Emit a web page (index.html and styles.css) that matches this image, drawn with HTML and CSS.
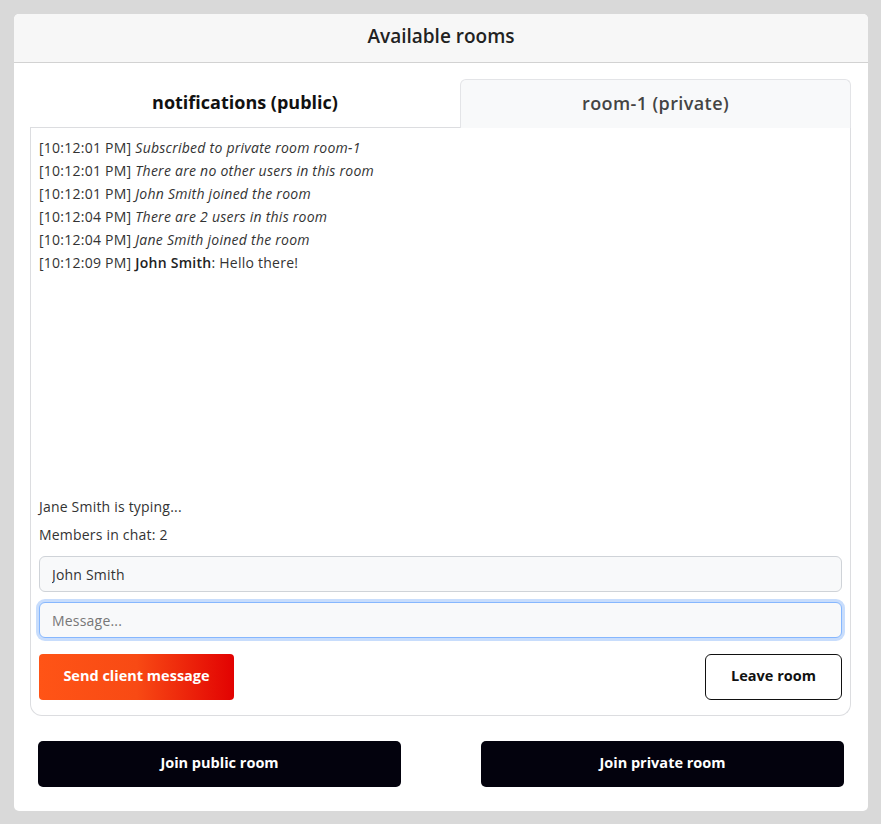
FILE: index.html
```html
<!DOCTYPE html>
<html>
<head>
<meta charset="utf-8">
<link rel="stylesheet" href="styles.css">
</head>
<body>
<div class="card">
  <div class="card-header">Available rooms</div>
  <div class="card-body">
    <div class="tabs">
      <div class="tab active">notifications (public)</div>
      <div class="tab">room-1 (private)</div>
    </div>
    <div class="panel">
      <div class="log">
        <div class="line">[10:12:01 PM] <em>Subscribed to private room room-1</em></div>
        <div class="line">[10:12:01 PM] <em>There are no other users in this room</em></div>
        <div class="line">[10:12:01 PM] <em>John Smith joined the room</em></div>
        <div class="line">[10:12:04 PM] <em>There are 2 users in this room</em></div>
        <div class="line">[10:12:04 PM] <em>Jane Smith joined the room</em></div>
        <div class="line">[10:12:09 PM] <strong>John Smith</strong>: Hello there!</div>
      </div>
      <div class="status">Jane Smith is typing...</div>
      <div class="status">Members in chat: 2</div>
      <input class="field" type="text" value="John Smith">
      <input class="field focus" type="text" placeholder="Message...">
      <div class="actions">
        <button class="btn send">Send client message</button>
        <button class="btn leave">Leave room</button>
      </div>
    </div>
    <div class="join-row">
      <button class="btn join">Join public room</button>
      <button class="btn join">Join private room</button>
    </div>
  </div>
</div>
</body>
</html>
```
FILE: styles.css
```css
html, body {
  margin: 0;
  padding: 0;
  background: #d9d9d9;
  font-family: "Open Sans", Lato, sans-serif;
  color: #222;
}
body {
  padding: 14px 13px 13px 14px;
}
.card {
  width: 854px;
  background: #fff;
  border-radius: 5px;
  overflow: hidden;
}
.card-header {
  height: 48px;
  line-height: 45px;
  background: #f7f7f7;
  border-bottom: 1px solid #d2d2d2;
  text-align: center;
  font-size: 19px;
  font-weight: 600;
  color: #222;
}
.card-body {
  padding: 16px 17px 24px 16px;
}
.tabs {
  display: flex;
  height: 49px;
}
.tab {
  flex: 1;
  display: flex;
  align-items: center;
  justify-content: center;
  padding-bottom: 3px;
  box-sizing: border-box;
  font-size: 18px;
  font-weight: 700;
}
.tab.active {
  border-bottom: 1px solid #dcdde0;
  color: #111;
  flex: 0 0 430px;
}
.tab:not(.active) {
  background: #f8f9fa;
  border: 1px solid #e3e4e7;
  border-bottom: none;
  border-radius: 6px 6px 0 0;
  color: #444;
  font-weight: 600;
  letter-spacing: 0.4px;
}
.panel {
  border: 1px solid #dcdde0;
  border-top: none;
  border-radius: 0 0 12px 12px;
  padding: 8px 8px 15px 8px;
  display: flex;
  flex-direction: column;
}
.log {
  height: 357px;
  font-size: 14px;
  letter-spacing: 0.25px;
  line-height: 23px;
  color: #333;
}
.log em { color: #333; }
.log strong { color: #222; font-weight: 600; }
.status {
  font-size: 14px;
  letter-spacing: 0.2px;
  line-height: 28px;
  color: #333;
}
.field {
  height: 36px;
  box-sizing: border-box;
  border: 1px solid #cfd3d8;
  border-radius: 6px;
  background: #f8f9fa;
  padding: 0 12px;
  font-family: inherit;
  font-size: 14px;
  letter-spacing: 0.2px;
  color: #333;
  margin-top: 10px;
  outline: none;
}
.field:first-of-type { margin-top: 7px; }
.field.focus {
  border-color: #86b7fe;
  box-shadow: 0 0 0 3px #c8ddfc;
}
.field::placeholder { color: #777; }
.actions {
  display: flex;
  justify-content: space-between;
  margin-top: 16px;
}
.btn {
  height: 46px;
  border: none;
  padding: 0 0 3px;
  font-family: inherit;
  font-size: 14.5px;
  font-weight: 700;
  cursor: pointer;
}
.send {
  width: 195px;
  border-radius: 4px;
  color: #fff;
  background: linear-gradient(90deg, #ff5416 0%, #f84a14 50%, #e20202 100%);
}
.leave {
  width: 137px;
  background: #fff;
  border: 1px solid #111;
  border-radius: 6px;
  color: #111;
}
.join-row {
  display: flex;
  gap: 80px;
  margin-top: 25px;
  padding: 0 7px 0 8px;
}
.join {
  flex: 1;
  background: #03020d;
  color: #fff;
  border-radius: 5px;
}
```
